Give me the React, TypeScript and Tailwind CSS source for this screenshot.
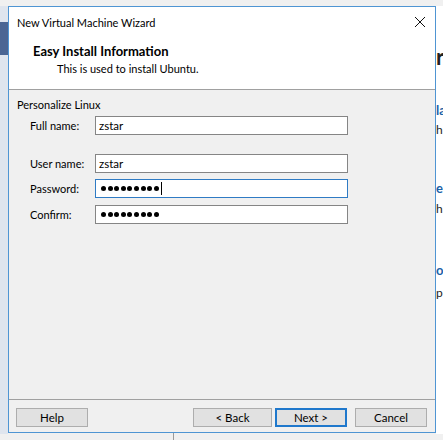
import React from "react";

const font = { fontFamily: 'Lato, "Noto Sans", sans-serif' };

function Field({ label, value, dots, focused, className = "" }: { label: string; value?: string; dots?: boolean; focused?: boolean; className?: string }) {
  return (
    <div className={`flex items-center h-[19px] ${className}`}>
      <div className="w-[86px] shrink-0 pl-[21px] text-[11px] leading-none text-black whitespace-nowrap">{label}</div>
      <div
        className={`w-[253px] h-[19px] bg-white flex items-center pl-[3px] ${focused ? "border border-[#2f7bc4]" : "border border-[#858585]"}`}
      >
        {dots ? (
          <span className="flex items-center gap-[1.6px] pl-[2px]">
            {Array.from({ length: 9 }).map((_, i) => (
              <span key={i} className="w-[5px] h-[5px] rounded-full bg-black" />
            ))}
            {focused && <span className="ml-[1px] w-[1px] h-[13px] bg-black" />}
          </span>
        ) : (
          <span className="text-[11.5px] leading-none text-black">{value}</span>
        )}
      </div>
    </div>
  );
}

function Btn({ children, primary, w = 72 }: { children: React.ReactNode; primary?: boolean; w?: number }) {
  return (
    <div
      className={`h-[19px] flex items-center justify-center text-[11.5px] leading-none text-black bg-[#e1e1e1] ${primary ? "border-2 border-[#1f78cc]" : "border border-[#adadad]"}`}
      style={{ width: w }}
    >
      {children}
    </div>
  );
}

export default function App() {
  return (
    <div className="relative w-[443px] h-[440px] overflow-hidden bg-[#f0f0f0]" style={font}>
      {/* desktop behind */}
      <div className="absolute left-0 top-[6px] w-[8px] h-[428px] bg-[#dfe5ee]" />
      <div className="absolute left-0 top-[22px] w-[8px] h-[33px] bg-[#4b6694]" />
      <div className="absolute left-[436px] top-[6px] w-[7px] h-[428px] bg-white overflow-hidden">
        <div className="absolute top-[40px] left-0 text-[22px] font-bold leading-none text-[#222]">r</div>
        <div className="absolute top-[98px] left-0 text-[13px] font-bold leading-none text-[#1b62a8]">la</div>
        <div className="absolute top-[118px] left-0 text-[12px] leading-none text-[#222]">h</div>
        <div className="absolute top-[176px] left-0 text-[13px] font-bold leading-none text-[#1b62a8]">e</div>
        <div className="absolute top-[197px] left-0 text-[12px] leading-none text-[#222]">h</div>
        <div className="absolute top-[258px] left-0 text-[13px] font-bold leading-none text-[#1b62a8]">o</div>
        <div className="absolute top-[281px] left-0 text-[12px] leading-none text-[#222]">p</div>
      </div>
      <div className="absolute left-[173px] top-[433px] w-[1px] h-[7px] bg-[#9a9a9a]" />

      {/* wizard window */}
      <div className="absolute left-[8px] top-[6px] w-[428px] h-[427px] border border-[#4f95d3] bg-[#f0f0f0] flex flex-col">
        <div className="bg-white h-[82px] flex flex-col">
          <div className="h-[30px] flex items-center justify-between pl-[8px] pr-[8px]">
            <span className="text-[11px] leading-none text-black">New Virtual Machine Wizard</span>
            <svg width="12" height="12" viewBox="0 0 12 12" className="mr-[1px]">
              <path d="M1 1 L11 11 M11 1 L1 11" stroke="#111" strokeWidth="1" />
            </svg>
          </div>
          <div className="pl-[24px] mt-[8px] text-[13px] font-bold leading-none text-black">Easy Install Information</div>
          <div className="pl-[48px] mt-[5px] text-[11px] leading-none text-black">This is used to install Ubuntu.</div>
        </div>
        <div className="h-[1px] bg-[#a0a0a0]" />
        <div className="flex-1 flex flex-col">
          <div className="pl-[8px] mt-[9px] text-[11px] leading-none text-black">Personalize Linux</div>
          <Field label="Full name:" value="zstar" className="mt-[6px]" />
          <Field label="User name:" value="zstar" className="mt-[19px]" />
          <Field label="Password:" dots focused className="mt-[6px]" />
          <Field label="Confirm:" dots className="mt-[7px]" />
        </div>
        <div className="h-[1px] bg-[#a0a0a0]" />
        <div className="h-[32px] flex items-start pt-[8px] pl-[7px]">
          <Btn>Help</Btn>
          <div className="ml-[105px]">
            <Btn w={79}>&lt; Back</Btn>
          </div>
          <div className="ml-[3px]">
            <Btn primary>Next &gt;</Btn>
          </div>
          <div className="ml-[8px]">
            <Btn>Cancel</Btn>
          </div>
        </div>
      </div>
    </div>
  );
}
